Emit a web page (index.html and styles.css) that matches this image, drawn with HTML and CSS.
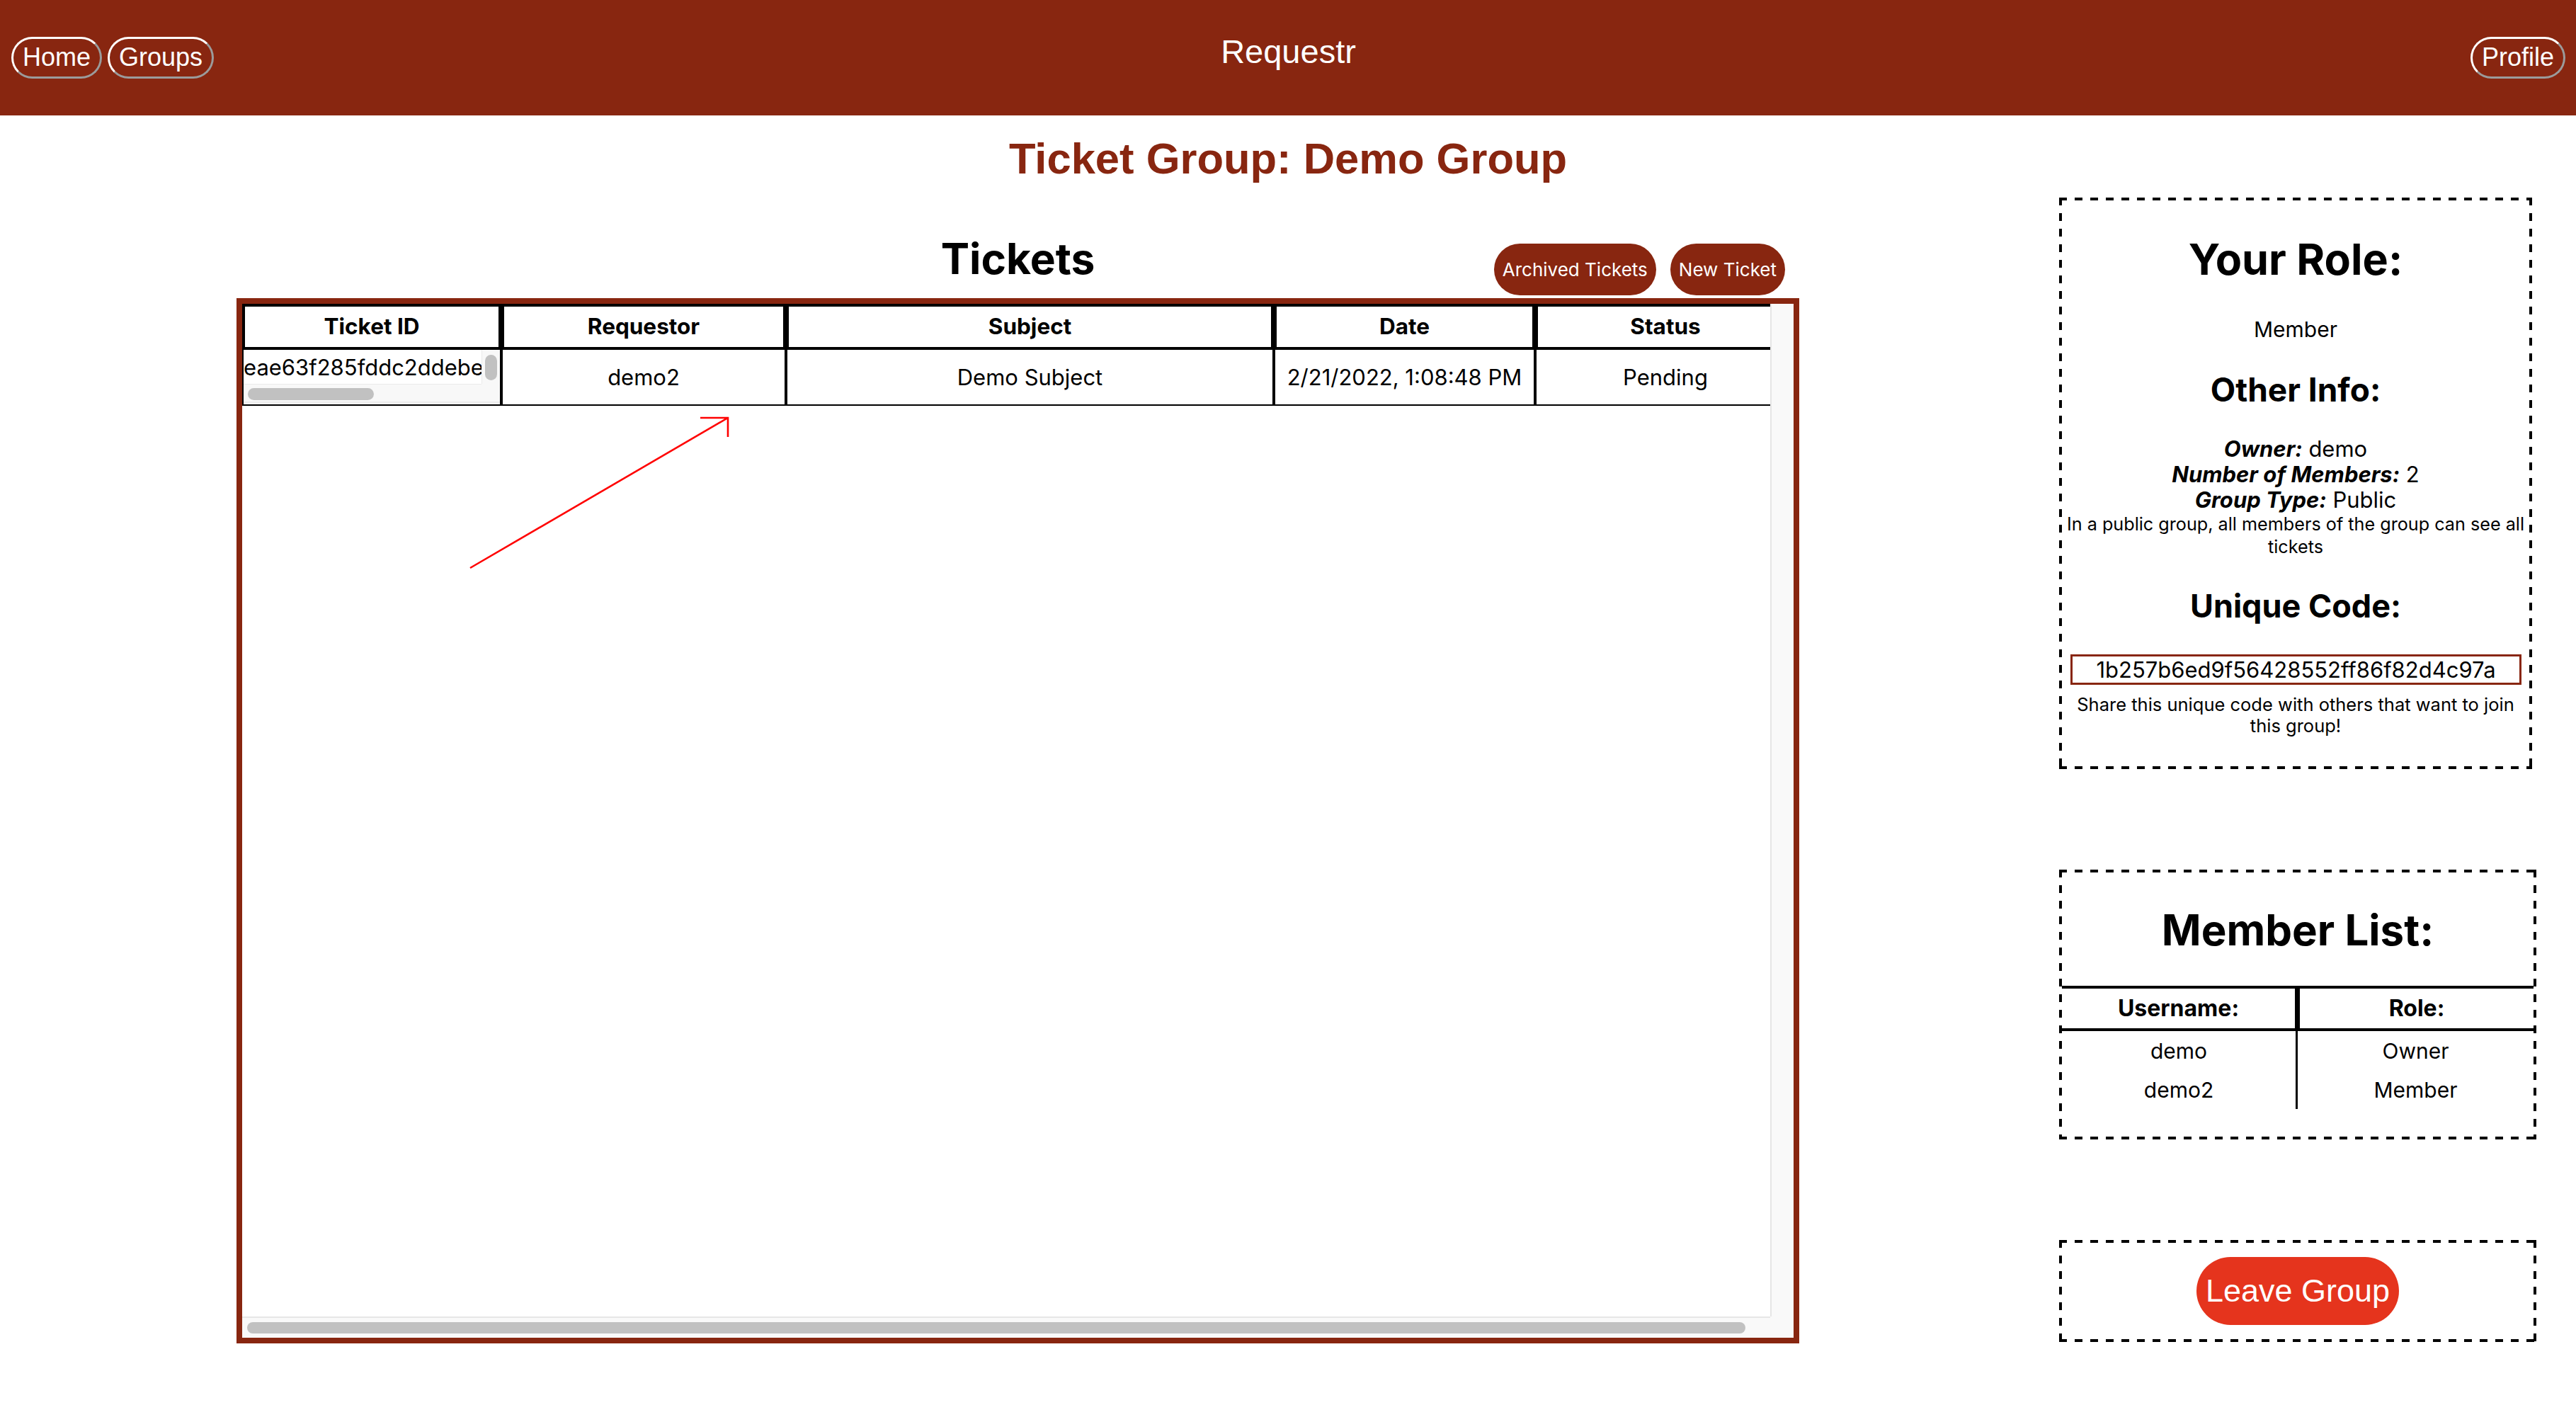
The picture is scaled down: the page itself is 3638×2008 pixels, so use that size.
FILE: index.html
```html
<!DOCTYPE html>
<html lang="en">
<head>
<meta charset="utf-8">
<title>Requestr</title>
<link rel="stylesheet" href="styles.css">
</head>
<body>
<header class="topbar">
  <nav class="nav-left">
    <button class="nav-btn">Home</button>
    <button class="nav-btn">Groups</button>
  </nav>
  <div class="brand">Requestr</div>
  <nav class="nav-right">
    <button class="nav-btn">Profile</button>
  </nav>
</header>

<h1 class="page-title">Ticket Group: Demo Group</h1>

<main class="layout">
  <section class="tickets">
    <div class="tickets-head">
      <h2 class="tickets-title">Tickets</h2>
      <div class="tickets-actions">
        <button class="pill">Archived Tickets</button>
        <button class="pill">New Ticket</button>
      </div>
    </div>
    <div class="table-box">
      <div class="table-viewport">
        <table class="ticket-table">
          <thead>
            <tr>
              <th class="c-id">Ticket ID</th>
              <th class="c-req">Requestor</th>
              <th class="c-sub">Subject</th>
              <th class="c-date">Date</th>
              <th class="c-status">Status</th>
            </tr>
          </thead>
          <tbody>
            <tr>
              <td class="id-cell">
                <div class="id-box">
                  <div class="id-view">eae63f285fddc2ddebe4a91c07b3d58f</div>
                  <div class="id-vtrack"><div class="id-vthumb"></div></div>
                  <div class="id-htrack"><div class="id-hthumb"></div></div>
                  <div class="id-corner"></div>
                </div>
              </td>
              <td>demo2</td>
              <td>Demo Subject</td>
              <td>2/21/2022, 1:08:48 PM</td>
              <td>Pending</td>
            </tr>
          </tbody>
        </table>
      </div>
      <div class="vtrack"></div>
      <div class="htrack"><div class="hthumb"></div></div>
      <div class="corner"></div>
    </div>
    <svg class="arrow" width="400" height="230" viewBox="0 0 400 230">
      <path d="M24 222 L388 10 M349 10 L388 10 L388 37" fill="none" stroke="#ff0000" stroke-width="2.6"/>
    </svg>
  </section>

  <aside class="sidebar">
    <div class="card card-info">
      <h2 class="role-title">Your Role:</h2>
      <p class="role-value">Member</p>
      <h2 class="sub-title">Other Info:</h2>
      <div class="info">
        <div><b><i>Owner:</i></b> demo</div>
        <div><b><i>Number of Members:</i></b> 2</div>
        <div><b><i>Group Type:</i></b> Public</div>
      </div>
      <p class="note">In a public group, all members of the group can see all tickets</p>
      <h2 class="sub-title code-title">Unique Code:</h2>
      <div class="code-box">1b257b6ed9f56428552ff86f82d4c97a</div>
      <p class="share">Share this unique code with others that want to join this group!</p>
    </div>

    <div class="card card-members">
      <h2 class="members-title">Member List:</h2>
      <table class="member-table">
        <thead>
          <tr><th>Username:</th><th>Role:</th></tr>
        </thead>
        <tbody>
          <tr><td>demo</td><td>Owner</td></tr>
          <tr><td>demo2</td><td>Member</td></tr>
        </tbody>
      </table>
    </div>

    <div class="card card-leave">
      <button class="leave-btn">Leave Group</button>
    </div>
  </aside>
</main>
</body>
</html>
```

FILE: styles.css
```css
* { box-sizing: border-box; }

html, body {
  margin: 0;
  padding: 0;
  background: #ffffff;
}

body {
  width: 3638px;
  font-family: Inter, "Noto Sans", sans-serif;
  color: #000;
}

/* ---------- top bar ---------- */
.topbar {
  height: 163px;
  background: #882610;
  display: grid;
  grid-template-columns: 1fr auto 1fr;
  align-items: center;
  padding: 0 15px 0 16px;
}

.nav-left { display: flex; gap: 8px; }
.nav-right { display: flex; justify-content: flex-end; }

.nav-btn {
  font-family: "Liberation Sans", Arial, sans-serif;
  font-size: 36px;
  line-height: 41px;
  color: #fff;
  background: transparent;
  border: 3px solid;
  border-color: #ffffff #9b9b9b #9b9b9b #ffffff;
  border-radius: 30px;
  padding: 5px 13px 7px;
}

.brand {
  margin-bottom: 18px;
  font-family: "Liberation Sans", Arial, sans-serif;
  font-size: 47px;
  line-height: 54px;
  color: #fff;
}

/* ---------- page title ---------- */
.page-title {
  margin: 26px 0 0;
  text-align: center;
  font-family: "Liberation Sans", Arial, sans-serif;
  font-size: 61.5px;
  line-height: 69px;
  font-weight: bold;
  color: #882610;
}

/* ---------- main layout ---------- */
.layout {
  display: flex;
  align-items: flex-start;
  gap: 367px;
  padding-left: 334px;
  margin-top: 21px;
}

.tickets {
  position: relative;
  flex: none;
  width: 2207px;
  padding-top: 50px;
}

.tickets-head {
  display: grid;
  grid-template-columns: 1fr auto 1fr;
  align-items: end;
}

.tickets-title {
  grid-column: 2;
  margin: 0 0 20px;
  font-size: 60.5px;
  line-height: 72px;
  font-weight: 700;
}

.tickets-actions {
  grid-column: 3;
  justify-self: end;
  display: flex;
  gap: 20px;
  margin: 0 20px 4px 0;
}

.pill {
  height: 73px;
  padding: 0 12px;
  border: none;
  border-radius: 37px;
  background: #882610;
  color: #fff;
  font-family: Inter, sans-serif;
  font-size: 26px;
}

/* ---------- tickets table box (static scroll frame) ---------- */
.table-box {
  height: 1476px;
  border: 8px solid #882610;
  display: grid;
  grid-template-columns: 1fr 33px;
  grid-template-rows: 1fr 30px;
}

.table-viewport {
  overflow: hidden;
  min-width: 0;
  background: #fff;
}

.vtrack {
  background: #f9f9f9;
  border-left: 2px solid #e6e6e6;
}

.htrack {
  background: #f9f9f9;
  border-top: 2px solid #e6e6e6;
  padding: 6px 0 0 7px;
}

.hthumb {
  width: 2116px;
  height: 16px;
  border-radius: 8px;
  background: #c1c1c1;
}

.corner { background: #f9f9f9; }

.ticket-table {
  width: 2194px;
  table-layout: fixed;
  border-collapse: separate;
  border-spacing: 0;
}

.ticket-table th {
  border: 4px solid #000;
  font-size: 31.5px;
  line-height: 36px;
  font-weight: 700;
  padding: 10px 0 11px;
  text-align: center;
}

.c-id { width: 366px; }
.c-req { width: 402px; }
.c-sub { width: 689px; }
.c-date { width: 369px; }
.c-status { width: 368px; }

.ticket-table td {
  border: 2px solid #000;
  border-top: 0;
  padding: 0;
  font-size: 31px;
  line-height: 36px;
  text-align: center;
  vertical-align: middle;
  white-space: nowrap;
}

.ticket-table td.id-cell {
  text-align: left;
  padding-bottom: 2px;
}

/* ticket id: small scroll frame */
.id-box {
  height: 75px;
  display: grid;
  grid-template-columns: 1fr 26px;
  grid-template-rows: 48px 27px;
}

.id-view {
  overflow: hidden;
  min-width: 0;
  padding-top: 2px;
  line-height: 46px;
  white-space: nowrap;
  background: #fff;
}

.id-vtrack {
  background: #f8f8f8;
  border-left: 1px solid #ebebeb;
  padding: 7px 0 0 4px;
}

.id-vthumb {
  width: 17px;
  height: 36px;
  border-radius: 9px;
  background: #c1c1c1;
}

.id-htrack {
  background: #f8f8f8;
  border-top: 1px solid #ebebeb;
  border-bottom: 2px solid #ececec;
  padding: 5px 0 0 6px;
}

.id-hthumb {
  width: 178px;
  height: 17px;
  border-radius: 9px;
  background: #c1c1c1;
}

.id-corner {
  background: #f8f8f8;
  border-bottom: 2px solid #ececec;
}

.arrow {
  position: absolute;
  left: 306px;
  top: 301px;
}

/* ---------- sidebar ---------- */
.sidebar {
  flex: none;
  width: 674px;
  display: flex;
  flex-direction: column;
  gap: 142px;
}

/* dashed frame drawn with gradients: 4px thick, 11px dashes, 11px gaps */
.card {
  padding: 4px;
  text-align: center;
  background:
    repeating-linear-gradient(90deg, #000 0 11px, transparent 11px 22px) left top / 100% 4px no-repeat,
    repeating-linear-gradient(90deg, #000 0 11px, transparent 11px 22px) left bottom / 100% 4px no-repeat,
    repeating-linear-gradient(180deg, #000 0 11px, transparent 11px 22px) left top / 4px 100% no-repeat,
    repeating-linear-gradient(180deg, #000 0 11px, transparent 11px 22px) right top / 4px 100% no-repeat;
}

.card-info {
  width: 668px;
  padding-bottom: 47px;
}

.role-title {
  margin: 48px 0 0;
  font-size: 61px;
  line-height: 70px;
  font-weight: 700;
}

.role-value {
  margin: 45.7px 0 0;
  font-size: 30px;
  line-height: 36px;
}

.sub-title {
  margin: 40.2px 0 0;
  font-size: 46px;
  line-height: 54px;
  font-weight: 700;
}

.info {
  margin-top: 39px;
  font-size: 31px;
  line-height: 36px;
}

.note {
  margin: 0;
  font-size: 25.2px;
  line-height: 32px;
}

.code-title {
  margin-top: 41.3px;
  font-size: 45px;
}

.code-box {
  margin: 41.3px 11px 0 12px;
  height: 43px;
  border: 3px solid #882610;
  font-size: 31px;
  line-height: 37px;
}

.share {
  margin: 13px 0 0;
  padding: 0 12px;
  font-size: 25.5px;
  line-height: 29.5px;
}

.card-members {
  padding: 4px 4px 43px;
}

.members-title {
  margin: 44px 0 0;
  font-size: 60px;
  line-height: 75px;
  font-weight: 700;
}

.member-table {
  width: 100%;
  margin-top: 41px;
  border-collapse: separate;
  border-spacing: 0;
  table-layout: fixed;
}

.member-table th {
  border-top: 4px solid #000;
  border-bottom: 4px solid #000;
  padding: 9.5px 0 10.5px;
  font-size: 32px;
  line-height: 36px;
  font-weight: 700;
}

.member-table th:first-child { border-right: 4px solid #000; }
.member-table th:last-child { border-left: 3px solid #000; }

.member-table td {
  padding: 10px 0 9px;
  font-size: 30px;
  line-height: 36px;
}

.member-table td:first-child { border-right: 3px solid #000; }

.card-leave {
  padding: 24px 4px;
}

.leave-btn {
  height: 96px;
  padding: 0 13px;
  border: none;
  border-radius: 48px;
  background: #e5341d;
  color: #fff;
  font-family: "Liberation Sans", Arial, sans-serif;
  font-size: 45px;
}
```
